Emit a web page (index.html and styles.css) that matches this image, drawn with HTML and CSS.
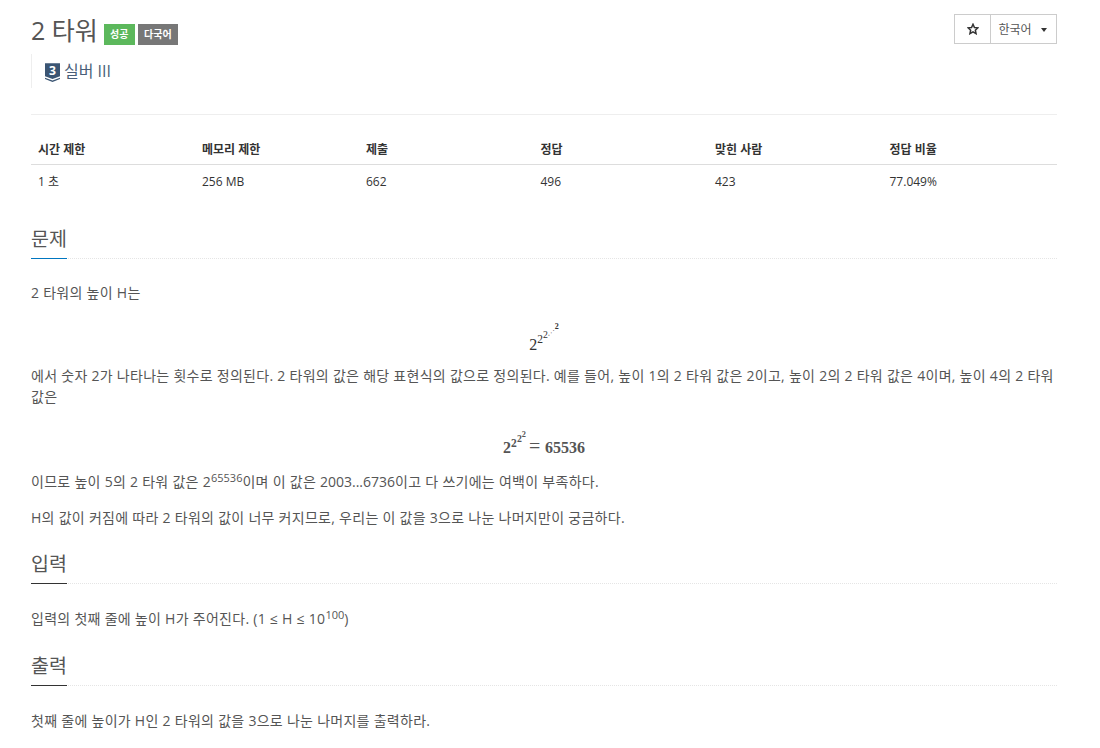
FILE: index.html
```html
<!DOCTYPE html>
<html lang="ko">
<head>
    <meta charset="UTF-8">
    <title>2 타워</title>
    <link rel="stylesheet" href="styles.css">
</head>
<body>
<div class="page">
    <div class="page-header">
        <div class="title-row">
            <h1 class="title">2 타워</h1>
            <span class="label label-success">성공</span>
            <span class="label label-gray">다국어</span>
            <div class="btn-group">
                <button class="btn btn-star">
                    <svg width="12" height="12" viewBox="0 0 24 24"><path d="M12 2.500l2.900 6.400 6.900.8-5.100 4.700 1.400 6.900-6.100-3.500-6.100 3.500 1.400-6.900-5.100-4.700 6.900-.8z" fill="none" stroke="#333" stroke-width="3"/></svg>
                </button>
                <button class="btn btn-lang">한국어<span class="caret"></span></button>
            </div>
        </div>
        <blockquote class="tier">
            <svg class="tier-icon" width="15" height="19" viewBox="0 0 16 20">
                <path d="M0 0h16v14l-8 3-8-3z" fill="#3b5573"/>
                <path d="M0 15.500l8 3 8-3v1.500l-8 3-8-3z" fill="#3b5573"/>
                <text x="8" y="12.500" text-anchor="middle" class="tier-num">3</text>
            </svg>
            <a class="tier-name">실버 III</a>
        </blockquote>
    </div>

    <table class="info">
        <thead>
            <tr>
                <th class="col-a">시간 제한</th>
                <th class="col-a">메모리 제한</th>
                <th class="col-b">제출</th>
                <th class="col-b">정답</th>
                <th class="col-b">맞힌 사람</th>
                <th>정답 비율</th>
            </tr>
        </thead>
        <tbody>
            <tr>
                <td>1 초</td>
                <td>256 MB</td>
                <td>662</td>
                <td>496</td>
                <td>423</td>
                <td>77.049%</td>
            </tr>
        </tbody>
    </table>

    <section class="problem-section first">
        <div class="headline"><h2>문제</h2></div>
        <p>2 타워의 높이 H는</p>
        <div class="math math-tower">2<sup>2<sup>2<sup class="dots">⋰</sup><sup class="top">2</sup></sup></sup></div>
        <p>에서 숫자 2가 나타나는 횟수로 정의된다. 2 타워의 값은 해당 표현식의 값으로 정의된다. 예를 들어, 높이 1의 2 타워 값은 2이고, 높이 2의 2 타워 값은 4이며, 높이 4의 2 타워 값은</p>
        <div class="math math-value">2<sup>2<sup>2<sup>2</sup></sup></sup><span class="eq">=</span>65536</div>
        <p>이므로 높이 5의 2 타워 값은 2<sup class="pow">65536</sup>이며 이 값은 <span class="num">2003...6736</span>이고 다 쓰기에는 여백이 부족하다.</p>
        <p>H의 값이 커짐에 따라 2 타워의 값이 너무 커지므로, 우리는 이 값을 3으로 나눈 나머지만이 궁금하다.</p>
    </section>

    <section class="problem-section">
        <div class="headline"><h2>입력</h2></div>
        <p>입력의 첫째 줄에 높이 H가 주어진다. (1 ≤ H ≤ 10<sup class="pow">100</sup>)</p>
    </section>

    <section class="problem-section">
        <div class="headline"><h2>출력</h2></div>
        <p>첫째 줄에 높이가 H인 2 타워의 값을 3으로 나눈 나머지를 출력하라.</p>
    </section>
</div>
</body>
</html>
```

FILE: styles.css
```css
* {
    box-sizing: border-box;
}
html, body {
    margin: 0;
    padding: 0;
    background: #fff;
}
body {
    font-family: "Open Sans", "Noto Sans CJK KR", sans-serif;
    font-size: 14px;
    line-height: 21px;
    color: #555;
    height: 748px;
    overflow: hidden;
}
.page {
    margin: 0 43px 0 31px;
}
.page-header {
    padding-top: 14px;
    height: 115px;
    border-bottom: 1px solid #eee;
}
.title-row {
    display: flex;
    align-items: center;
    height: 32px;
}
.title {
    margin: 0;
    font-size: 25px;
    font-weight: 400;
    line-height: 32px;
    color: #555;
}
.label {
    display: inline-block;
    height: 21px;
    padding: 0 6.300px;
    margin-top: 8px;
    font-size: 10px;
    font-weight: 700;
    line-height: 21px;
    color: #fff;
}
.label-success {
    background: #5cb85c;
    margin-left: 6px;
}
.label-gray {
    background: #777;
    margin-left: 3px;
}
.btn-group {
    display: flex;
    margin-left: auto;
    margin-top: -2px;
}
.btn {
    height: 30px;
    background: #fff;
    border: 1px solid #ccc;
    color: #555;
    font: inherit;
    font-size: 12px;
    padding: 0;
}
.btn-star {
    width: 37px;
    display: flex;
    align-items: center;
    justify-content: center;
}
.btn-lang {
    width: 67px;
    margin-left: -1px;
    text-align: left;
    padding-left: 7.500px;
}
.caret {
    display: inline-block;
    margin-left: 9px;
    vertical-align: middle;
    border-top: 4px solid #333;
    border-left: 3px solid transparent;
    border-right: 3px solid transparent;
}
.tier {
    display: flex;
    align-items: center;
    margin: 8px 0 0;
    padding: 0 0 0 13px;
    height: 34px;
    border-left: 1px solid #eee;
    font-size: 16px;
    color: #495e78;
}
.tier-icon {
    margin: 3px 4px 0 0;
}
.tier-num {
    font-size: 13px;
    font-weight: 700;
    fill: #fff;
}
.info {
    width: 100%;
    border-collapse: collapse;
    table-layout: fixed;
    margin-top: 21px;
    font-size: 12px;
    color: #333;
}
.info th {
    height: 28px;
    padding: 0 7px 1px;
    text-align: left;
    font-weight: 700;
    border-bottom: 1px solid #ddd;
}
.info td {
    height: 34px;
    padding: 0 7px;
}
.col-a {
    width: 164px;
}
.col-b {
    width: 174.500px;
}
.headline {
    height: 37px;
    border-bottom: 1px dotted #e5e5e5;
    margin-bottom: 24px;
}
.first .headline {
    margin-bottom: 23px;
}
.headline h2 {
    display: inline-block;
    margin: 0;
    height: 37px;
    font-size: 19.500px;
    font-weight: 400;
    line-height: 34px;
    color: #555;
    border-bottom: 1px solid #333;
}
.first {
    margin-top: 24px;
}
.first .headline h2 {
    border-bottom-color: #0076c0;
}
.problem-section + .problem-section {
    margin-top: 19px;
}
.problem-section:last-child {
    margin-top: 20px;
}
.problem-section p {
    margin: 0 0 15px;
    letter-spacing: 0.28px;
}
.problem-section p:last-child {
    margin-bottom: 0;
}
.problem-section .num {
    letter-spacing: 0;
}
.math {
    text-align: center;
    font-family: "Liberation Serif", serif;
    color: #555;
}
.math sup {
    font-size: 72%;
    line-height: 0;
    vertical-align: 0.55em;
}
.math sup sup {
    font-size: 85%;
}
.math-tower {
    height: 47px;
    padding-top: 9px;
    font-size: 16px;
    color: #333;
}
.math-value {
    height: 49px;
    padding-top: 13px;
    font-size: 16px;
    font-weight: 700;
}
.eq {
    margin: 0 4.700px 0 3px;
    font-size: 20px;
    line-height: 0;
    font-weight: 400;
}
.math .dots {
    font-family: "DejaVu Sans", sans-serif;
    font-size: 7px;
    vertical-align: 3px;
}
.math .top {
    font-size: 8px;
    font-weight: 700;
    vertical-align: 9px;
}
.problem-section .pow {
    font-size: 11px;
    line-height: 0;
    letter-spacing: 0;
    vertical-align: 0.5em;
}
```
